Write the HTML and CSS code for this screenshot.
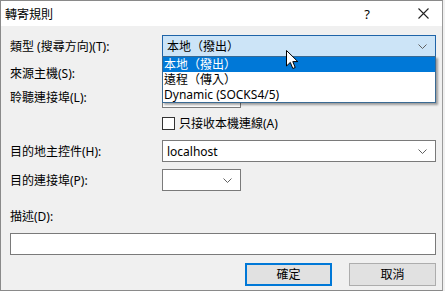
FILE: index.html
```html
<!DOCTYPE html>
<html lang="zh-Hant">
<head>
    <meta charset="utf-8">
    <title>轉寄規則</title>
    <link rel="stylesheet" href="styles.css">
</head>
<body>
    <div class="dialog">
        <div class="titlebar">
            <span class="title">轉寄規則</span>
            <span class="help">?</span>
            <span class="close">
                <svg width="11" height="11" viewBox="0 0 11 11"><path d="M0.5 0.5L10.5 10.5M10.5 0.5L0.5 10.5" stroke="#222" stroke-width="1.1"/></svg>
            </span>
        </div>
        <div class="content">
            <div class="row first">
                <div class="label">類型 (搜尋方向)(T):</div>
                <div class="ctrl">
                    <div class="combo open">
                        <span class="value">本地（撥出）</span>
                        <svg class="chev" width="9" height="5" viewBox="0 0 9 5"><path d="M0.5 0.5L4.5 4.5L8.5 0.5" fill="none" stroke="#606060"/></svg>
                    </div>
                    <ul class="list">
                        <li class="sel">本地（撥出）</li>
                        <li>遠程（傳入）</li>
                        <li>Dynamic (SOCKS4/5)</li>
                    </ul>
                </div>
            </div>
            <div class="row r2">
                <div class="label">來源主機(S):</div>
                <div class="ctrl"><div class="field"></div></div>
            </div>
            <div class="row r3">
                <div class="label">聆聽連接埠(L):</div>
                <div class="ctrl"><div class="field short"></div></div>
            </div>
            <div class="row r4">
                <div class="label"></div>
                <div class="ctrl check"><span class="box"></span>只接收本機連線(A)</div>
            </div>
            <div class="row r5">
                <div class="label">目的地主控件(H):</div>
                <div class="ctrl">
                    <div class="combo">
                        <span class="value">localhost</span>
                        <svg class="chev" width="9" height="5" viewBox="0 0 9 5"><path d="M0.5 0.5L4.5 4.5L8.5 0.5" fill="none" stroke="#606060"/></svg>
                    </div>
                </div>
            </div>
            <div class="row r6">
                <div class="label">目的連接埠(P):</div>
                <div class="ctrl">
                    <div class="combo short">
                        <span class="value"></span>
                        <svg class="chev" width="9" height="5" viewBox="0 0 9 5"><path d="M0.5 0.5L4.5 4.5L8.5 0.5" fill="none" stroke="#606060"/></svg>
                    </div>
                </div>
            </div>
            <div class="desc-label">描述(D):</div>
            <div class="field desc"></div>
            <div class="buttons">
                <div class="btn default">確定</div>
                <div class="btn">取消</div>
            </div>
        </div>
        <svg class="cursor" width="13" height="20" viewBox="0 0 13 20"><path d="M0.5 0.5L0.5 16L4.3 12.4L6.8 18.5L9.2 17.5L6.8 11.6L11.8 11.6Z" fill="#fff" stroke="#000" stroke-width="1" stroke-linejoin="miter"/></svg>
    </div>
</body>
</html>
```

FILE: styles.css
```css
* {
    box-sizing: border-box;
}

html, body {
    margin: 0;
    padding: 0;
    background: #f0f0f0;
}

body {
    font-family: "Noto Sans", "Noto Sans CJK TC", sans-serif;
    font-size: 12px;
    color: #000;
}

.dialog {
    position: relative;
    width: 443px;
    height: 291px;
    border: 1px solid #8a8a8a;
    border-right-color: #9a9a9a;
    background: #f0f0f0;
}

.titlebar {
    display: flex;
    align-items: center;
    height: 25px;
    background: #fff;
    padding-left: 4px;
}

.title {
    flex: 1;
    font-size: 12px;
}

.help {
    width: 30px;
    margin-right: 36px;
    text-align: center;
    font-size: 13px;
}

.close {
    display: flex;
    width: 16px;
    margin-right: 8px;
}

.content {
    padding: 9px 6px 0 9px;
}

.row {
    display: flex;
    align-items: center;
    height: 22px;
}

.r2 { margin-top: 5px; }
.r3 { margin-top: 2px; }
.r4 { margin-top: 4px; }
.r5 { margin-top: 6px; }
.r6 { margin-top: 7px; }

.label {
    width: 152px;
    flex: none;
    white-space: nowrap;
}

.ctrl {
    position: relative;
    flex: 1;
    height: 22px;
}

.combo {
    display: flex;
    align-items: center;
    height: 22px;
    border: 1px solid #7a7a7a;
    background: #fff;
    padding: 0 8px 0 4px;
}

.combo .value {
    flex: 1;
}

.combo.open {
    background: #cce4f7;
    border-color: #1f64a8;
}

.combo.short, .field.short {
    width: 79px;
}

.field {
    height: 22px;
    border: 1px solid #7a7a7a;
    background: #fff;
}

.list {
    position: absolute;
    left: 0;
    top: 21px;
    width: 100%;
    margin: 0;
    padding: 0;
    list-style: none;
    background: #fff;
    border: 1px solid #3a6a93;
    box-shadow: 2px 2px 2px rgba(0, 0, 0, 0.35);
    z-index: 2;
}

.list li {
    height: 15px;
    line-height: 15px;
    padding-left: 1px;
    white-space: nowrap;
}

.list li.sel {
    background: #0078d7;
    color: #fff;
}

.check {
    display: flex;
    align-items: center;
    height: 22px;
}

.box {
    width: 13px;
    height: 13px;
    border: 1px solid #333;
    background: #fff;
    margin-right: 4px;
}

.desc-label {
    margin-top: 17px;
    height: 18px;
    line-height: 18px;
}

.field.desc {
    margin-top: 7px;
    width: 426px;
}

.buttons {
    display: flex;
    justify-content: flex-end;
    gap: 17px;
    margin-top: 8px;
    width: 426px;
}

.btn {
    width: 87px;
    height: 23px;
    line-height: 21px;
    text-align: center;
    background: #e1e1e1;
    border: 1px solid #adadad;
}

.btn.default {
    border: 2px solid #0078d7;
    line-height: 19px;
}

.cursor {
    position: absolute;
    left: 285px;
    top: 49px;
    z-index: 3;
}
```
